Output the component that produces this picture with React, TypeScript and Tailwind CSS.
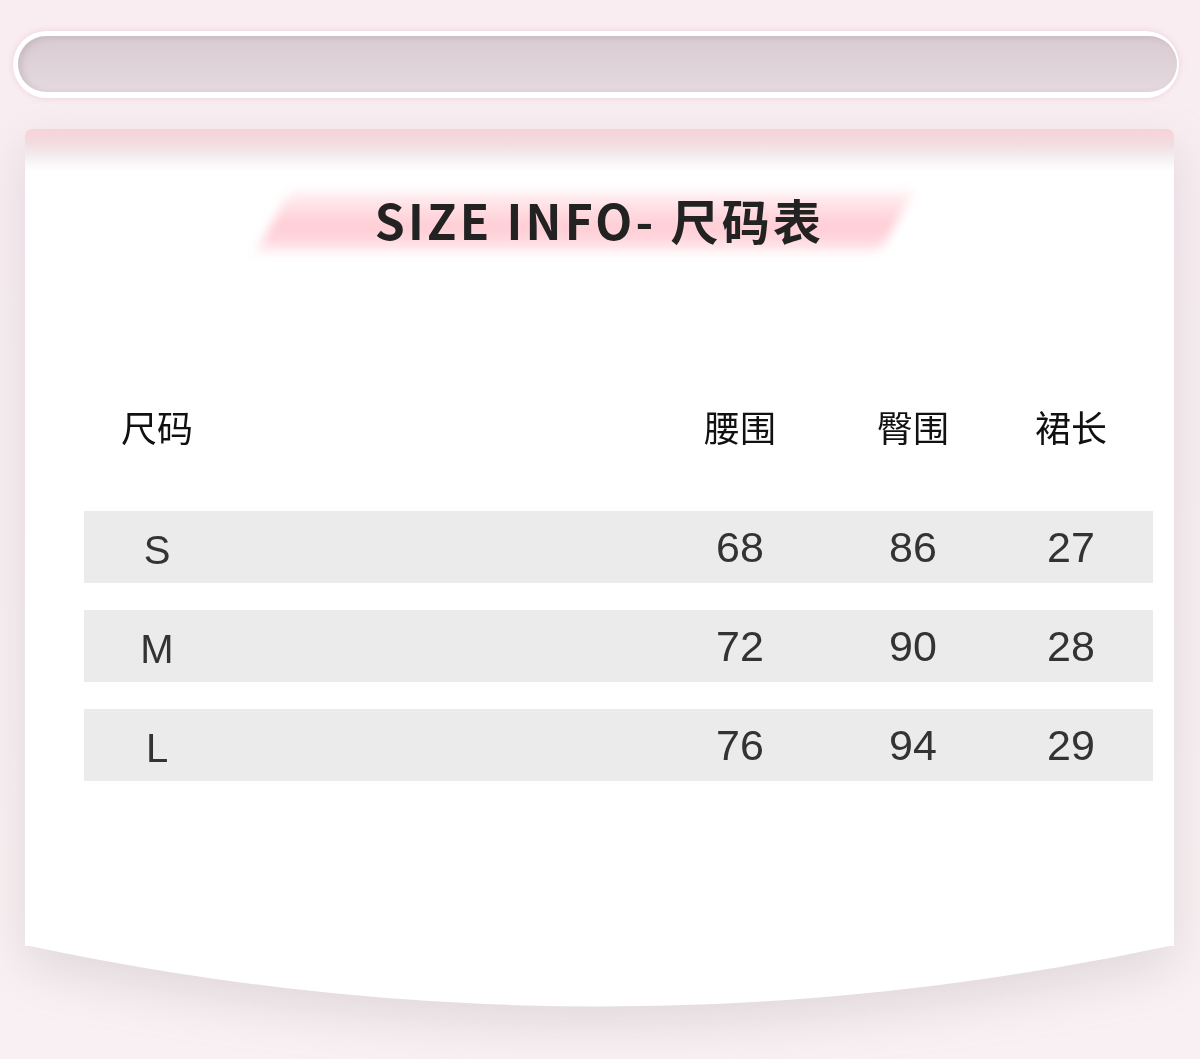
import React from "react";

const rows = [
  { s: "S", w: "68", h: "86", l: "27" },
  { s: "M", w: "72", h: "90", l: "28" },
  { s: "L", w: "76", h: "94", l: "29" },
];

export default function App() {
  return (
    <div className="w-[1200px] h-[1059px] overflow-hidden bg-[linear-gradient(180deg,#f9edf1_0%,#f8eff2_60%,#f8f1f3_100%)]">
      {/* top pill */}
      <div className="ml-[13px] mt-[31px] w-[1166px] h-[67px] rounded-full bg-white p-[5px] pr-[2px] shadow-[0_0_6px_rgba(230,190,205,0.6)]">
        <div className="h-[56px] rounded-full bg-[linear-gradient(180deg,#d9ccd2_0%,#e4d9de_100%)] shadow-[inset_4px_2px_6px_rgba(170,150,160,0.35)]" />
      </div>

      {/* card */}
      <div className="ml-[25px] mt-[31px] w-[1149px] drop-shadow-[0_18px_24px_rgba(140,130,135,0.22)]">
        <div className="h-[817px] rounded-t-[7px] bg-[linear-gradient(180deg,#f6d2d9_0px,#f2dce0_14px,#f3eced_26px,#ffffff_42px)] flex flex-col">
          {/* title */}
          <div className="relative mt-[59px] h-[62px] flex items-center justify-center">
            <div className="absolute left-[248px] top-[4px] w-[624px] h-[58px] -skew-x-[28deg] blur-[6px] bg-[linear-gradient(180deg,rgba(255,225,230,0.5)_0%,#ffcbd3_60%,rgba(255,214,222,0.7)_100%)]" />
            <div className="relative text-[48px] font-bold tracking-[3.2px] text-[#222222] leading-none [font-family:'Noto_Sans_CJK_SC','Noto_Sans',sans-serif]">
              SIZE INFO- 尺码表
            </div>
          </div>

          {/* header */}
          <div className="mt-[146px] ml-[59px] mr-[21px] pr-[11px] h-[60px] grid grid-cols-[146px_1fr_172px_174px_142px] items-center text-[36px] text-[#111111] [font-family:'Noto_Sans_CJK_SC',sans-serif]">
            <div className="text-center">尺码</div>
            <div />
            <div className="text-center">腰围</div>
            <div className="text-center">臀围</div>
            <div className="text-center">裙长</div>
          </div>

          {/* rows */}
          <div className="mt-[55px] ml-[59px] mr-[21px] flex flex-col gap-[27px]">
            {rows.map((r) => (
              <div
                key={r.s}
                className="h-[72px] bg-[#ebebeb] pr-[11px] grid grid-cols-[146px_1fr_172px_174px_142px] items-center text-[43px] text-[#333333] [font-family:'Liberation_Sans',Arial,sans-serif]"
              >
                <div className="text-center text-[40px] pt-[6px]">{r.s}</div>
                <div />
                <div className="text-center">{r.w}</div>
                <div className="text-center">{r.h}</div>
                <div className="text-center">{r.l}</div>
              </div>
            ))}
          </div>
        </div>
        <svg width="1149" height="62" viewBox="0 0 1149 62" className="block -mt-px">
          <path d="M0 0 L1149 0 Q574.5 123 0 0 Z" fill="#ffffff" />
        </svg>
      </div>
    </div>
  );
}
